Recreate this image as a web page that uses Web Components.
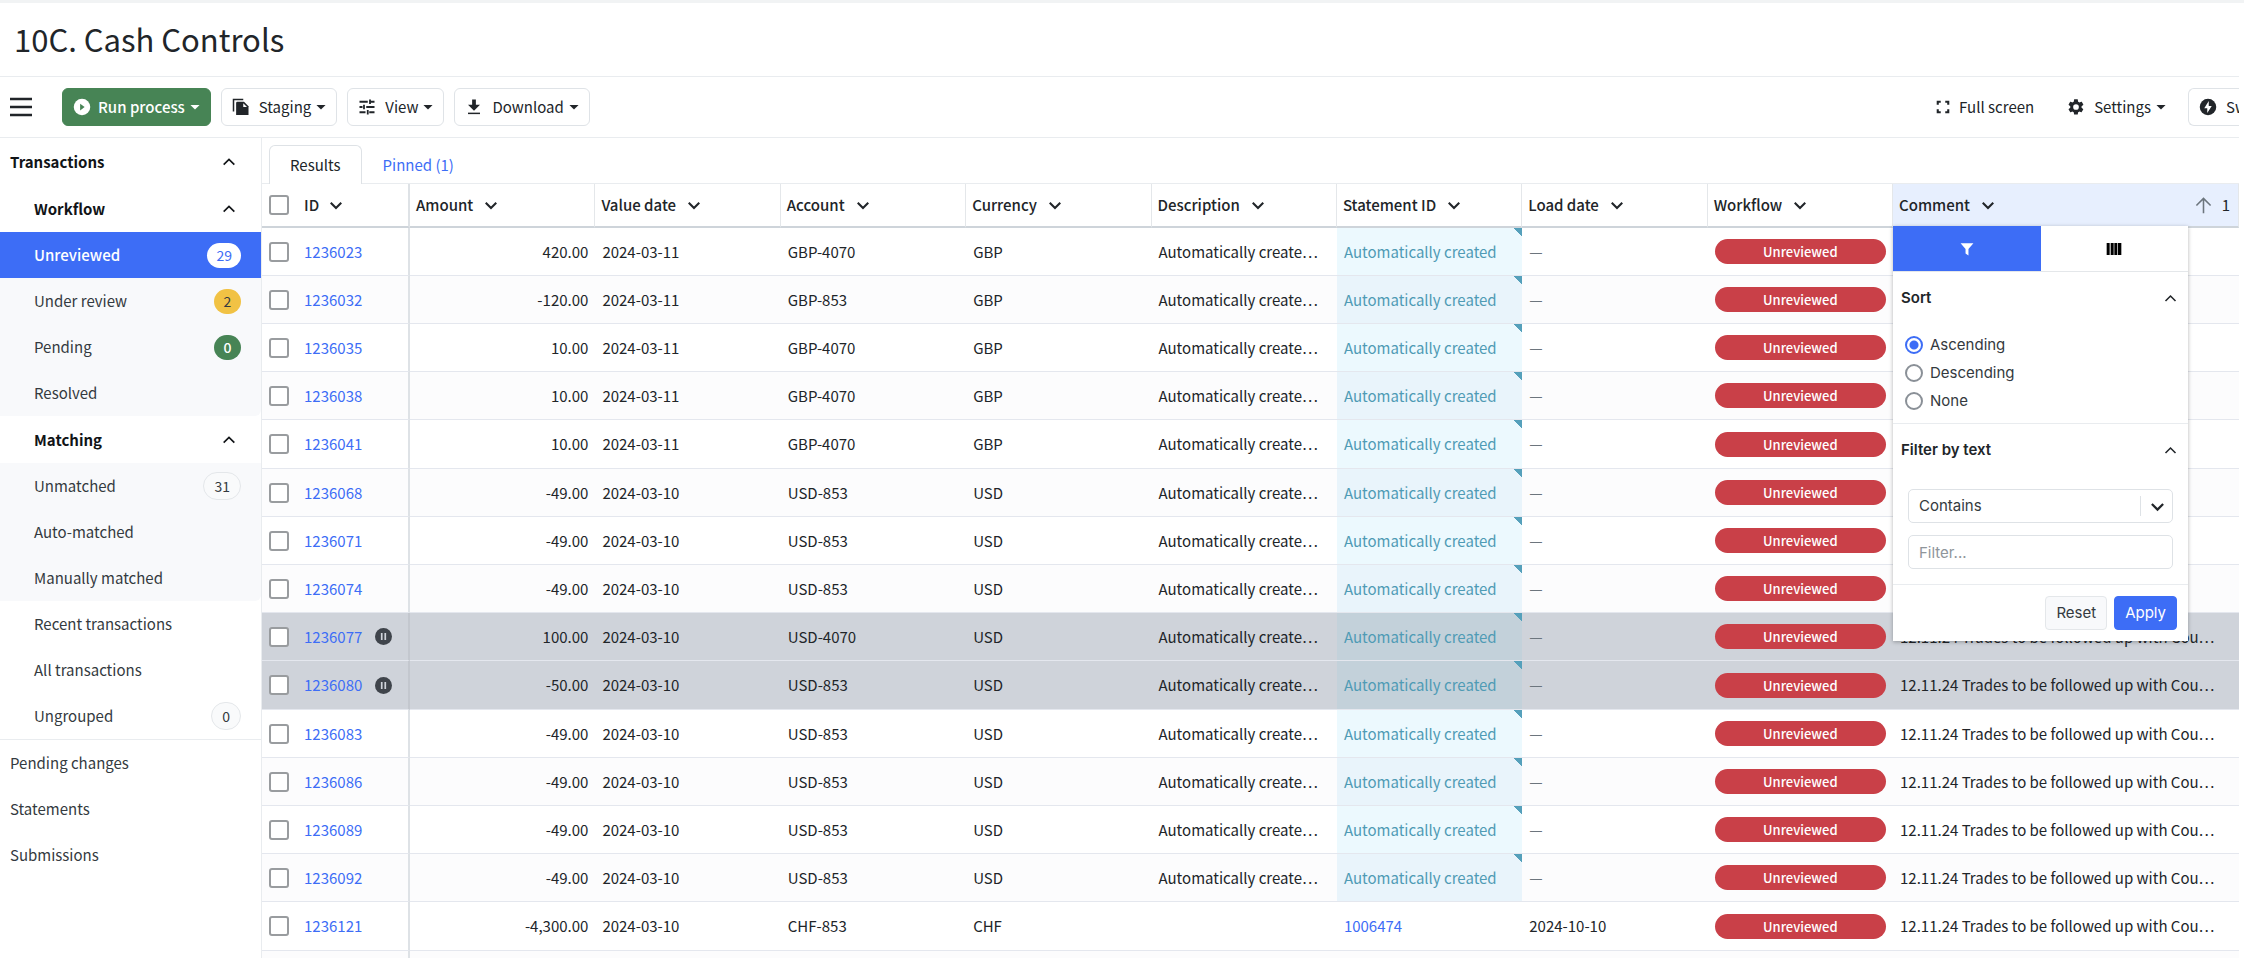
<!DOCTYPE html>
<html lang="en">
<head>
<meta charset="utf-8">
<meta name="viewport" content="width=device-width, initial-scale=1">
<title>10C. Cash Controls</title>
<style>
    * {
        box-sizing: border-box;
    }
    body {
        height: 100vh;
        margin: 0;
        overflow: hidden;
        background: #fff;
        color: #212529;
        font-family: "Noto Sans CJK SC", "Noto Sans", sans-serif;
        font-size: 15px;
        line-height: 20px;
    }
</style>
</head>
<body>

<cash-app>
    <page-title slot="title">10C. Cash Controls</page-title>

    <tool-bar slot="toolbar">
        <tool-button icon="play" variant="primary" caret>Run process</tool-button>
        <tool-button icon="copy" caret>Staging</tool-button>
        <tool-button icon="sliders" caret>View</tool-button>
        <tool-button icon="download" caret>Download</tool-button>
        <tool-button slot="end" icon="expand" variant="plain">Full screen</tool-button>
        <tool-button slot="end" icon="gear" variant="plain" caret>Settings</tool-button>
        <tool-button slot="end" icon="bolt" variant="cut">Sw</tool-button>
    </tool-bar>

    <side-nav slot="nav">
        <nav-section label="Transactions" top></nav-section>
        <nav-section label="Workflow" shaded>
            <nav-item count="29" tone="light" active>Unreviewed</nav-item>
            <nav-item count="2" tone="yellow">Under review</nav-item>
            <nav-item count="0" tone="green">Pending</nav-item>
            <nav-item>Resolved</nav-item>
        </nav-section>
        <nav-section label="Matching" shaded>
            <nav-item count="31" tone="outline">Unmatched</nav-item>
            <nav-item>Auto-matched</nav-item>
            <nav-item>Manually matched</nav-item>
        </nav-section>
        <nav-item>Recent transactions</nav-item>
        <nav-item>All transactions</nav-item>
        <nav-item count="0" tone="outline" last>Ungrouped</nav-item>
        <nav-item top>Pending changes</nav-item>
        <nav-item top>Statements</nav-item>
        <nav-item top>Submissions</nav-item>
    </side-nav>

    <result-tabs slot="main"></result-tabs>
    <results-table slot="main"></results-table>
</cash-app>

<script>
const ICONS = {
    play: '<circle cx="12" cy="12" r="11" fill="currentColor"/><path d="M9.500 7.500v9l6-4.500z" fill="#478455"/>',
    copy: '<path d="M2 18V2h13" fill="none" stroke="currentColor" stroke-width="2"/><path d="M7 5h9l6 6v11.500H5.500V6.500A1.500 1.500 0 0 1 7 5z" fill="currentColor"/><path d="M15 7v5h5z" fill="#fff"/>',
    sliders: '<path d="M2 5h11M17 5h5M16 2v6M2 12h4M11 12h11M8 9v6M2 19h8M15 19h7M13 16v6" fill="none" stroke="currentColor" stroke-width="2.400"/>',
    download: '<path d="M9.500 2h5v7H20l-8 8-8-8h5.500z" fill="currentColor"/><path d="M4 19.500h16v2H4z" fill="currentColor"/>',
    expand: '<path d="M5 9V5h4M15 5h4v4M19 15v4h-4M9 19H5v-4" fill="none" stroke="currentColor" stroke-width="2.800"/>',
    gear: '<path fill-rule="evenodd" fill="currentColor" d="M19.400 13a7.500 7.500 0 0 0 0-2l2.200-1.700c.2-.2.3-.4.1-.7l-2-3.500c-.1-.2-.4-.3-.6-.2l-2.600 1c-.5-.4-1.100-.8-1.700-1L14.400 2.200c0-.2-.2-.4-.5-.4h-4c-.2 0-.4.2-.5.4L9 4.900c-.6.300-1.200.6-1.700 1l-2.500-1c-.2-.1-.5 0-.6.200l-2 3.500c-.1.200-.1.500.1.600L4.400 11a8 8 0 0 0 0 2l-2.100 1.600c-.2.200-.3.400-.1.700l2 3.500c.1.200.4.300.6.200l2.500-1c.5.4 1.100.8 1.700 1l.4 2.700c0 .2.200.4.5.4h4c.2 0 .5-.2.5-.4l.4-2.700c.6-.3 1.200-.6 1.700-1l2.500 1c.2.100.5 0 .6-.2l2-3.500c.1-.2.1-.5-.1-.7zM12 15.800a3.800 3.800 0 1 1 0-7.600 3.800 3.800 0 0 1 0 7.600z"/>',
    bolt: '<circle cx="12" cy="12" r="11" fill="currentColor"/><path d="M13 4L7 13.500h4V20l6-9.500h-4z" fill="#fff"/>',
    up: '<path d="M4 16l8-8 8 8" fill="none" stroke="currentColor" stroke-width="2.500"/>',
    down: '<path d="M3 8l9 9 9-9" fill="none" stroke="currentColor" stroke-width="3.600"/>',
    arrow: '<path d="M12 23V3M2 12L12 2l10 10" fill="none" stroke="currentColor" stroke-width="2.200"/>',
    pause: '<circle cx="12" cy="12" r="12" fill="currentColor"/><path d="M9.500 7v10M14.500 7v10" stroke="#cfd3da" stroke-width="2.400"/>',
    funnel: '<path d="M1 2h22l-8.500 10v11l-5-3.500V12z" fill="currentColor"/>',
    columns: '<path d="M1 3h4.500v18H1zM7 3h4.500v18H7zM12.500 3H17v18h-4.500zM18 3h5v18h-5z" fill="currentColor"/>',
    menu: '<path d="M1 4h22M1 12h22M1 20h22" stroke="currentColor" stroke-width="2.400"/>',
    caret: '<path d="M1 7h22L12 18z" fill="currentColor"/>'
};

class UiIcon extends HTMLElement {

    constructor() {
        super();
        this.shadowDOM = this.attachShadow({mode: "open"});
    }

    connectedCallback() {
        const size = this.getAttribute("size") || 16;
        this.shadowDOM.innerHTML = `
        <style>
        :host {
            display: block;
            flex: none;
            width: ${size}px;
            height: ${size}px;
        }
        svg {
            display: block;
            width: 100%;
            height: 100%;
        }
        </style>
        <svg viewBox="0 0 24 24" aria-hidden="true">${ICONS[this.getAttribute("name")]}</svg>`;
    }
}

class CashApp extends HTMLElement {

    constructor() {
        super();
        this.attachShadow({mode: "open"}).innerHTML = `
        <style>
        :host {
            display: flex;
            flex-direction: column;
            height: 100vh;
            padding-right: 5px;
            border-top: 3px solid #f1f3f4;
            overflow: hidden;
        }
        .body {
            display: flex;
            flex: 1;
            min-height: 0;
        }
        main {
            flex: 1;
            min-width: 0;
        }
        </style>
        <slot name="title"></slot>
        <slot name="toolbar"></slot>
        <div class="body">
            <slot name="nav"></slot>
            <main><slot name="main"></slot></main>
        </div>`;
    }
}

class PageTitle extends HTMLElement {

    constructor() {
        super();
        this.attachShadow({mode: "open"}).innerHTML = `
        <style>
        :host {
            display: block;
            flex: none;
            padding: 16px 14px 17px;
            border-bottom: 1px solid #e9ecef;
        }
        h1 {
            margin: 0;
            font-size: 31px;
            line-height: 40px;
            font-weight: 400;
        }
        </style>
        <h1><slot></slot></h1>`;
    }
}

class ToolBar extends HTMLElement {

    constructor() {
        super();
        this.attachShadow({mode: "open"}).innerHTML = `
        <style>
        :host {
            display: flex;
            flex: none;
            align-items: center;
            gap: 10px;
            height: 61px;
            padding-left: 9px;
            border-bottom: 1px solid #e9ecef;
        }
        .menu {
            margin-right: 19px;
            padding: 0;
            border: 0;
            background: none;
            color: #212529;
        }
        .end {
            display: flex;
            align-items: center;
            gap: 11px;
            margin-left: auto;
        }
        </style>
        <button class="menu" aria-label="Menu"><ui-icon name="menu" size="24"></ui-icon></button>
        <slot></slot>
        <div class="end"><slot name="end"></slot></div>`;
    }
}

class ToolButton extends HTMLElement {

    constructor() {
        super();
        this.shadowDOM = this.attachShadow({mode: "open"});
    }

    connectedCallback() {
        this.shadowDOM.innerHTML = `
        <style>
        :host {
            display: block;
        }
        button {
            display: flex;
            align-items: center;
            height: 38px;
            padding: 0 10px;
            border: 1px solid #dfe3e7;
            border-radius: 6px;
            background: #fff;
            color: #212529;
            font: inherit;
            white-space: nowrap;
        }
        .icon {
            margin-right: 9px;
        }
        .caret {
            margin-left: 5px;
        }
        :host([variant="primary"]) button {
            border-color: #478455;
            background: #478455;
            color: #fff;
            font-weight: 500;
        }
        :host([variant="primary"]) .icon, :host([icon="expand"]) .icon {
            margin-right: 7px;
        }
        :host([variant="plain"]) button {
            border-color: transparent;
        }
        :host([variant="cut"]) button {
            width: 51px;
            border-right: 0;
            border-radius: 6px 0 0 6px;
            overflow: hidden;
        }
        </style>
        <button>
            <ui-icon class="icon" name="${this.getAttribute("icon")}" size="18"></ui-icon>
            <slot></slot>
            ${this.hasAttribute("caret") ? '<ui-icon class="caret" name="caret" size="10"></ui-icon>' : ""}
        </button>`;
    }
}

class SideNav extends HTMLElement {

    constructor() {
        super();
        this.attachShadow({mode: "open"}).innerHTML = `
        <style>
        :host {
            display: block;
            flex: none;
            width: 262px;
            border-right: 1px solid #e9ecef;
        }
        </style>
        <nav><slot></slot></nav>`;
    }
}

class NavSection extends HTMLElement {

    constructor() {
        super();
        this.shadowDOM = this.attachShadow({mode: "open"});
    }

    connectedCallback() {
        this.shadowDOM.innerHTML = `
        <style>
        :host {
            display: block;
        }
        button {
            display: flex;
            align-items: center;
            justify-content: space-between;
            width: 100%;
            height: 47px;
            padding: 0 24px 0 34px;
            border: 0;
            background: #fff;
            color: #111417;
            font: inherit;
            font-weight: 700;
        }
        :host([top]) button {
            padding-left: 10px;
        }
        :host([shaded]) .items {
            background: #f8f9fb;
            border-radius: 0 0 6px 0;
        }
        </style>
        <button aria-expanded="true">${this.getAttribute("label")}<ui-icon name="up" size="16"></ui-icon></button>
        <div class="items"><slot></slot></div>`;
    }
}

class NavItem extends HTMLElement {

    constructor() {
        super();
        this.shadowDOM = this.attachShadow({mode: "open"});
    }

    connectedCallback() {
        const count = this.getAttribute("count");
        this.shadowDOM.innerHTML = `
        <style>
        :host {
            display: block;
        }
        a {
            display: flex;
            align-items: center;
            justify-content: space-between;
            height: 46px;
            padding: 0 20px 0 34px;
            color: #343a40;
            text-decoration: none;
        }
        :host([top]) a {
            padding-left: 10px;
        }
        :host([active]) a {
            background: #3d6df6;
            color: #fff;
            font-weight: 500;
        }
        :host([last]) {
            border-bottom: 1px solid #e9ecef;
        }
        .badge {
            box-sizing: border-box;
            min-width: 27px;
            height: 25px;
            padding: 0 9px;
            border-radius: 14px;
            font-size: 14px;
            line-height: 25px;
            text-align: center;
        }
        .light {
            background: #fff;
            color: #3d6df6;
            font-weight: 400;
        }
        .yellow {
            background: #f1c244;
            color: #343a40;
        }
        .green {
            background: #478455;
            color: #fff;
            font-weight: 500;
        }
        .outline {
            height: 28px;
            padding: 0 10px;
            border: 1px solid #e4e7ea;
            background: #f9fafb;
            line-height: 26px;
        }
        </style>
        <a href="#"><slot></slot>${count ? `<span class="badge ${this.getAttribute("tone")}">${count}</span>` : ""}</a>`;
    }
}

class ResultTabs extends HTMLElement {

    constructor() {
        super();
        this.attachShadow({mode: "open"}).innerHTML = `
        <style>
        :host {
            display: flex;
            height: 46px;
            padding: 7px 7px 0;
            border-bottom: 1px solid #e9ecef;
        }
        a {
            box-sizing: border-box;
            height: 39px;
            padding: 9px 20px;
            border: 1px solid transparent;
            border-bottom: 0;
            border-radius: 6px 6px 0 0;
            color: #3d6df6;
            text-decoration: none;
        }
        a.active {
            border-color: #dee2e6;
            background: #fff;
            color: #212529;
        }
        </style>
        <a class="active" href="#results">Results</a>
        <a href="#pinned">Pinned (1)</a>`;
    }
}

class FilterPanel extends HTMLElement {

    constructor() {
        super();
        this.attachShadow({mode: "open"}).innerHTML = `
        <style>
        * {
            box-sizing: border-box;
        }
        :host {
            display: block;
            background: #fff;
            box-shadow: 0 1px 4px rgba(0, 0, 0, 0.3);
            color: #343a40;
            font-family: Inter, sans-serif;
            font-size: 15px;
            font-weight: 400;
        }
        button, select, input {
            font: inherit;
            color: inherit;
        }
        .tabs {
            display: grid;
            grid-template-columns: 1fr 1fr;
            height: 46px;
            border-bottom: 1px solid #e4e7ea;
        }
        .tabs button {
            display: flex;
            align-items: center;
            justify-content: center;
            border: 0;
            background: #fff;
            color: #000;
        }
        .tabs .active {
            background: #3d6df6;
            color: #fff;
        }
        section {
            border-bottom: 1px solid #e9ecef;
        }
        h2 {
            display: flex;
            align-items: center;
            justify-content: space-between;
            height: 52px;
            margin: 0;
            padding: 0 10px 0 8px;
            color: #212529;
            font-size: 15px;
            font-weight: 600;
        }
        .radios {
            display: grid;
            gap: 8px;
            padding: 11px 12px 12px;
        }
        label {
            display: flex;
            align-items: center;
            gap: 7px;
        }
        input[type="radio"] {
            appearance: none;
            width: 18px;
            height: 18px;
            margin: 0;
            border: 2px solid #8a9097;
            border-radius: 50%;
        }
        input[type="radio"]:checked {
            border-color: #3d6df6;
            background: radial-gradient(circle, #3d6df6 4px, #fff 5px);
        }
        .fields {
            display: grid;
            gap: 12px;
            padding: 13px 15px 15px;
        }
        .select {
            display: grid;
            grid-template-columns: 1fr 33px;
            align-items: center;
        }
        select, .text {
            appearance: none;
            width: 100%;
            height: 34px;
            padding: 0 10px;
            border: 1px solid #dee2e6;
            border-radius: 5px;
            background: #fff;
        }
        select {
            grid-area: 1 / 1 / 2 / 3;
        }
        .chevron {
            grid-area: 1 / 2;
            display: grid;
            place-items: center;
            height: 20px;
            border-left: 1px solid #dee2e6;
            color: #212529;
            pointer-events: none;
        }
        .text::placeholder {
            color: #8f959b;
            opacity: 1;
        }
        footer {
            display: flex;
            justify-content: flex-end;
            gap: 7px;
            padding: 11px;
        }
        footer button {
            height: 34px;
            padding: 0 10px;
            border: 1px solid #e4e7ea;
            border-radius: 4px;
            background: #f8f9fb;
        }
        footer .apply {
            border-color: #3d6df6;
            background: #3d6df6;
            color: #fff;
        }
        </style>
        <div class="tabs">
            <button class="active" aria-label="Filter"><ui-icon name="funnel" size="14"></ui-icon></button>
            <button aria-label="Columns"><ui-icon name="columns" size="16"></ui-icon></button>
        </div>
        <section>
            <h2>Sort <ui-icon name="up" size="15"></ui-icon></h2>
            <div class="radios">
                <label><input type="radio" name="sort" checked>Ascending</label>
                <label><input type="radio" name="sort">Descending</label>
                <label><input type="radio" name="sort">None</label>
            </div>
        </section>
        <section>
            <h2>Filter by text <ui-icon name="up" size="15"></ui-icon></h2>
            <div class="fields">
                <div class="select">
                    <select aria-label="Filter type"><option>Contains</option></select>
                    <span class="chevron"><ui-icon name="down" size="15"></ui-icon></span>
                </div>
                <input class="text" type="text" placeholder="Filter..." aria-label="Filter value">
            </div>
        </section>
        <footer>
            <button>Reset</button>
            <button class="apply">Apply</button>
        </footer>`;
    }
}

const COMMENT = "12.11.24 Trades to be followed up with Cou…";

// id, amount, value date, account, comment
const ROWS = [
    ["1236023", "420.00", "2024-03-11", "GBP-4070", ""],
    ["1236032", "-120.00", "2024-03-11", "GBP-853", ""],
    ["1236035", "10.00", "2024-03-11", "GBP-4070", ""],
    ["1236038", "10.00", "2024-03-11", "GBP-4070", ""],
    ["1236041", "10.00", "2024-03-11", "GBP-4070", ""],
    ["1236068", "-49.00", "2024-03-10", "USD-853", ""],
    ["1236071", "-49.00", "2024-03-10", "USD-853", ""],
    ["1236074", "-49.00", "2024-03-10", "USD-853", ""],
    ["1236077", "100.00", "2024-03-10", "USD-4070", COMMENT],
    ["1236080", "-50.00", "2024-03-10", "USD-853", COMMENT],
    ["1236083", "-49.00", "2024-03-10", "USD-853", COMMENT],
    ["1236086", "-49.00", "2024-03-10", "USD-853", COMMENT],
    ["1236089", "-49.00", "2024-03-10", "USD-853", COMMENT],
    ["1236092", "-49.00", "2024-03-10", "USD-853", COMMENT],
    ["1236121", "-4,300.00", "2024-03-10", "CHF-853", COMMENT]
];

const HELD = ["1236077", "1236080"];
const STATEMENTS = {"1236121": ["1006474", "2024-10-10"]};

class ResultsTable extends HTMLElement {

    constructor() {
        super();
        this.shadowDOM = this.attachShadow({mode: "open"});
    }

    connectedCallback() {
        this.render();
    }

    renderHead(label) {
        return `<th><span class="head">${label}<ui-icon name="down" size="14"></ui-icon></span></th>`;
    }

    renderRow([id, amount, date, account, comment]) {
        const held = HELD.includes(id);
        const statement = STATEMENTS[id];
        return `
        <tr class="${held ? "held" : ""}">
            <td class="id"><span class="cell">
                <input type="checkbox" aria-label="Select ${id}">
                <a href="#${id}">${id}</a>
                ${held ? '<ui-icon name="pause" size="17"></ui-icon>' : ""}
            </span></td>
            <td class="amount">${amount}</td>
            <td>${date}</td>
            <td>${account}</td>
            <td>${account.slice(0, 3)}</td>
            <td>${statement ? "" : "Automatically create…"}</td>
            ${statement
                ? `<td><a href="#${statement[0]}">${statement[0]}</a></td><td>${statement[1]}</td>`
                : `<td class="auto">Automatically created</td><td class="blank">—</td>`}
            <td><span class="pill">Unreviewed</span></td>
            <td>${comment}</td>
        </tr>`;
    }

    render() {
        const heads = ["Amount", "Value date", "Account", "Currency", "Description",
            "Statement ID", "Load date", "Workflow"];
        this.shadowDOM.innerHTML = `
        <style>
        * {
            box-sizing: border-box;
        }
        :host {
            display: block;
        }
        table {
            width: 100%;
            table-layout: fixed;
            border-collapse: separate;
            border-spacing: 0;
        }
        .col-id {
            width: 148px;
        }
        .col-comment {
            width: 346px;
        }
        th {
            height: 44px;
            padding: 0 6px;
            border-right: 1px solid #e4e7ea;
            border-bottom: 2px solid #ced4da;
            font-weight: 500;
            text-align: left;
        }
        td {
            height: 48px;
            padding: 0 7px;
            border-bottom: 1px solid #e4e7ee;
            white-space: nowrap;
        }
        tr:nth-child(5n) td {
            height: 49px;
        }
        th:first-child, td:first-child {
            padding-left: 7px;
            border-right: 2px solid #dee2e6;
        }
        tbody tr:nth-child(even) {
            background: #fcfcfd;
        }
        tbody tr.held {
            background: #cfd3da;
        }
        .held td:first-child {
            border-right-color: #c3c7ce;
        }
        .head, .cell {
            display: flex;
            align-items: center;
            gap: 11px;
        }
        .cell, .head.first {
            gap: 15px;
        }
        .cell ui-icon {
            color: #3f444b;
            margin-left: -2px;
        }
        .first span {
            display: flex;
            align-items: center;
            gap: 10px;
        }
        input {
            appearance: none;
            flex: none;
            width: 20px;
            height: 20px;
            margin: 0;
            border: 2px solid #999c9f;
            border-radius: 3px;
            background: #fff;
        }
        a {
            color: #3d6df6;
            text-decoration: none;
        }
        .amount {
            text-align: right;
        }
        .auto {
            color: #4f9bb5;
            background: linear-gradient(to bottom left, #55a0bb 50%, transparent 50%) top right / 8px 9px no-repeat #ecf9fe;
        }
        tr:nth-child(even) .auto {
            background-color: #e9f4fb;
        }
        .held .auto, tr.held:nth-child(even) .auto {
            background-color: #c3d1da;
        }
        .blank {
            color: #6c757d;
        }
        .pill {
            display: block;
            height: 25px;
            border-radius: 13px;
            background: #c94048;
            color: #fff;
            font-size: 13px;
            font-weight: 500;
            line-height: 25px;
            text-align: center;
        }
        .comment {
            position: relative;
            background: #e7effe;
        }
        .order {
            display: flex;
            align-items: center;
            gap: 10px;
            margin: 0 2px 0 auto;
            font-weight: 400;
        }
        .order ui-icon {
            color: #6c757d;
        }
        filter-panel {
            position: absolute;
            top: 100%;
            left: 0;
            z-index: 1;
            width: 295px;
        }
        </style>
        <table>
            <colgroup>
                <col class="col-id">
                <col span="8">
                <col class="col-comment">
            </colgroup>
            <thead>
                <tr>
                    <th><span class="head first">
                        <input type="checkbox" aria-label="Select all">
                        <span>ID<ui-icon name="down" size="14"></ui-icon></span>
                    </span></th>
                    ${heads.map(label => this.renderHead(label)).join("")}
                    <th class="comment">
                        <span class="head">Comment<ui-icon name="down" size="14"></ui-icon>
                            <span class="order"><ui-icon name="arrow" size="17"></ui-icon>1</span>
                        </span>
                        <filter-panel></filter-panel>
                    </th>
                </tr>
            </thead>
            <tbody>
                ${ROWS.map(row => this.renderRow(row)).join("")}
                <tr>${"<td></td>".repeat(10)}</tr>
            </tbody>
        </table>`;
    }
}

customElements.define("ui-icon", UiIcon);
customElements.define("cash-app", CashApp);
customElements.define("page-title", PageTitle);
customElements.define("tool-bar", ToolBar);
customElements.define("tool-button", ToolButton);
customElements.define("side-nav", SideNav);
customElements.define("nav-section", NavSection);
customElements.define("nav-item", NavItem);
customElements.define("result-tabs", ResultTabs);
customElements.define("filter-panel", FilterPanel);
customElements.define("results-table", ResultsTable);
</script>
</body>
</html>
